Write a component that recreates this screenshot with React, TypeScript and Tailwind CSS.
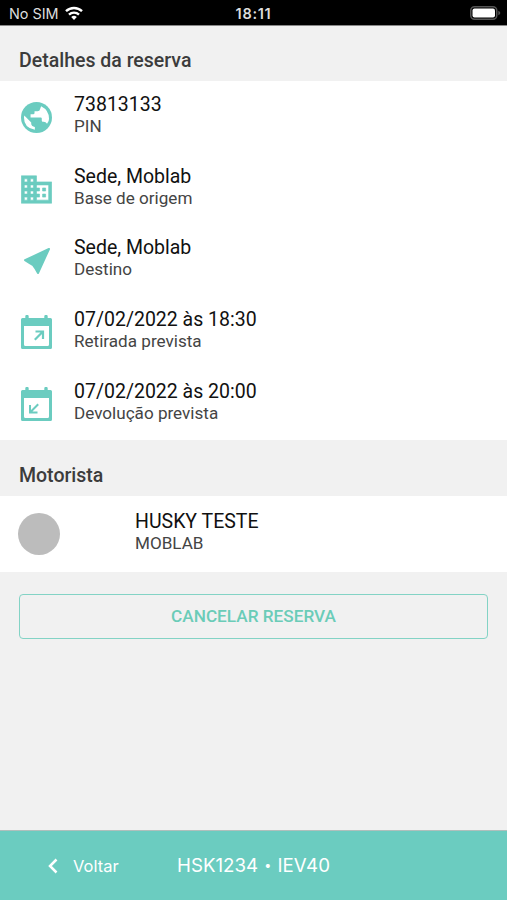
import type { ReactNode } from 'react';

interface DetailRowProps {
  icon: ReactNode;
  title: string;
  subtitle: string;
}

const GlobeIcon = () => (
  <svg viewBox="0 0 94 94" className="-mt-px h-[31px] w-[31px] shrink-0" fill="none">
    <circle cx="47" cy="47" r="47" fill="currentColor" />
    <path
      fill="#fff"
      d="M61 13Q85 25 85 51 85 60 79 66 75 60 69 60H66Q63 60 63 56V50Q63 47 60 47H29V37H37Q41 37 41 33V28H50Q57 28 58 21ZM10 41 31 62V67Q32 74 42 76V84Q9 79 9 47Z"
    />
  </svg>
);

const BuildingIcon = () => (
  <svg viewBox="1.800 2.800 20.400 18.400" className="h-[29px] w-[31px] shrink-0" fill="currentColor" stroke="currentColor" strokeWidth=".4" strokeLinejoin="round">
    <path d="M12 7V3H2v18h20V7H12zM6 19H4v-2h2v2zm0-4H4v-2h2v2zm0-4H4V9h2v2zm0-4H4V5h2v2zm4 12H8v-2h2v2zm0-4H8v-2h2v2zm0-4H8V9h2v2zm0-4H8V5h2v2zm10 12h-8v-2h2v-2h-2v-2h2v-2h-2V9h8v10zm-2-8h-2v2h2v-2zm0 4h-2v2h2v-2z" />
  </svg>
);

const NavigateIcon = () => (
  <svg viewBox="0 0 26 26" className="h-[26px] w-[26px]" fill="currentColor" stroke="currentColor" strokeLinejoin="round" strokeWidth="2">
    <path d="M25 1 1 12.200Q6 15.500 9 17 11.500 20 14 25Z" />
  </svg>
);

const CalendarIcon = ({ children }: { children: ReactNode }) => (
  <svg viewBox="0 0 31 34" className="-mt-px h-[34px] w-[31px]" fill="none">
    <path
      fill="currentColor"
      fillRule="evenodd"
      d="M5.500 0h1q1.200 0 1.200 1.200V3h15.600V1.200Q23.300 0 24.500 0h1q1.200 0 1.200 1.200V3h2.800Q31 3 31 4.500v28q0 1.500-1.500 1.500h-28Q0 34 0 32.500v-28Q0 3 1.500 3h2.800V1.200Q4.300 0 5.500 0ZM3 11v18.500q0 1.500 1.500 1.500h22q1.500 0 1.500-1.500V11Z"
    />
    {children}
  </svg>
);

const PickupIcon = () => (
  <CalendarIcon>
    <path d="M14.500 16.500h7.500v7.500M22 16.500l-8.200 8.200" stroke="currentColor" strokeWidth="2.200" />
  </CalendarIcon>
);

const ReturnIcon = () => (
  <CalendarIcon>
    <path d="M16.500 25.500H9V18M9 25.500l8.200-8.200" stroke="currentColor" strokeWidth="2" />
  </CalendarIcon>
);

const DetailRow = ({ icon, title, subtitle }: DetailRowProps) => (
  <div className="flex h-[71.700px] items-start">
    <div className="flex h-[73px] w-[74px] items-center pl-[21px]">
      <div className="flex w-[31px] justify-center text-[#6bccc0]">{icon}</div>
    </div>
    <div className="pt-[13px]">
      <p className="text-[19.500px] leading-[22px] text-[#111]">{title}</p>
      <p className="text-[17.100px] leading-[20.500px] text-[#444]">{subtitle}</p>
    </div>
  </div>
);

const StatusBar = () => (
  <div className="grid h-[26px] grid-cols-3 items-center border-b border-[#888] bg-black px-[9px] pt-px font-['Inter',sans-serif] text-[#ddd]">
    <div className="flex items-center gap-[6px]">
      <span className="pt-px text-[14.400px]">No SIM</span>
      <svg viewBox="0 0 18 14" className="h-[14px] w-[18px]" fill="none" stroke="#fff" strokeWidth="2.400">
        <path d="M1 5.200a11.500 11.500 0 0 1 16 0" />
        <path d="M4 8.600a7.200 7.200 0 0 1 10 0" />
        <path d="M9 14 6.200 11.100a4 4 0 0 1 5.600 0Z" fill="#fff" stroke="none" />
      </svg>
    </div>
    <span className="pt-px text-center text-[14.500px] font-semibold tracking-[.7px]">18:11</span>
    <div className="flex justify-end">
      <svg viewBox="0 0 31 14" className="-mr-[3px] h-[14px] w-[31px]">
        <rect x=".75" y=".75" width="26" height="12.500" rx="3.800" fill="none" stroke="#555" strokeWidth="1.500" />
        <rect x="2.500" y="2.500" width="22.500" height="9" rx="2" fill="#fff" />
        <path d="M28.300 4.700q2 .8 2 2.300t-2 2.300Z" fill="#555" />
      </svg>
    </div>
  </div>
);

export default function App() {
  return (
    <div className="flex h-[900px] w-[507px] flex-col bg-[#f1f1f1] font-['Roboto',sans-serif]">
      <StatusBar />

      <h2 className="flex h-[55px] items-center pt-3.5 pl-[19px] text-[19.500px] font-medium text-[#3c3c3c]">
        Detalhes da reserva
      </h2>
      <section className="h-[359px] bg-white">
        <DetailRow icon={<GlobeIcon />} title="73813133" subtitle="PIN" />
        <DetailRow icon={<BuildingIcon />} title="Sede, Moblab" subtitle="Base de origem" />
        <DetailRow icon={<NavigateIcon />} title="Sede, Moblab" subtitle="Destino" />
        <DetailRow icon={<PickupIcon />} title="07/02/2022 às 18:30" subtitle="Retirada prevista" />
        <DetailRow icon={<ReturnIcon />} title="07/02/2022 às 20:00" subtitle="Devolução prevista" />
      </section>

      <h2 className="flex h-14 items-center pt-[15px] pl-[19px] text-[19.500px] font-medium text-[#3c3c3c]">
        Motorista
      </h2>
      <section className="flex h-[76px] items-center bg-white pl-[18px]">
        <div className="h-[42px] w-[42px] rounded-full bg-[#bcbcbc]" />
        <div className="ml-[75px] pb-[3px]">
          <p className="text-[19.500px] leading-[22px] text-[#111]">HUSKY TESTE</p>
          <p className="text-[17.100px] leading-[20.500px] text-[#444]">MOBLAB</p>
        </div>
      </section>

      <button className="mx-[19px] mt-[22px] h-[45px] rounded-[4px] border-[1.500px] border-[#83d3c5] pt-px text-[17.200px] font-medium text-[#6bccb8]">
        CANCELAR RESERVA
      </button>

      <footer className="mt-auto flex h-[70px] items-center border-t border-[#b0bfbc] bg-[#6bccc0] pt-px font-['Inter',sans-serif] text-white">
        <button className="flex items-center pl-12">
          <svg viewBox="0 0 10 16" className="h-4 w-[10px]" fill="none" stroke="currentColor" strokeWidth="2.500">
            <path d="M8.500 1.500 2 8l6.500 6.500" />
          </svg>
          <span className="ml-[15px] w-[46px] text-left text-[16.500px]">Voltar</span>
        </button>
        <span className="ml-[58px] pt-px text-[18.700px]">
          HSK1234 <span className="mx-px align-[2px] text-[12.500px]">•</span> IEV40
        </span>
      </footer>
    </div>
  );
}
